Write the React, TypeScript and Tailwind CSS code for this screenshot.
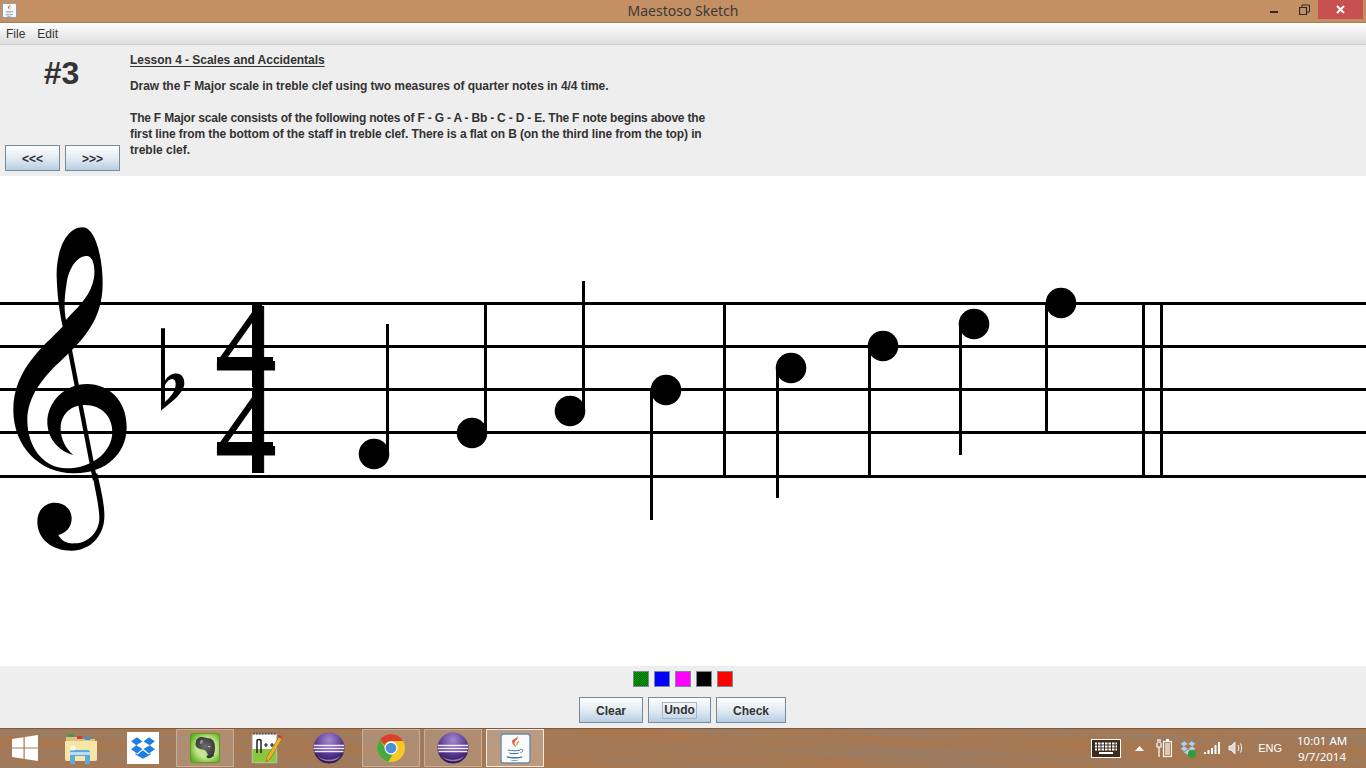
const sans = "font-['Liberation_Sans',Arial,sans-serif]"

const metalBtn =
  "flex items-center justify-center h-[26px] pt-[1px] border border-[#7a8a99] bg-gradient-to-b from-white via-[#e3ebf3] to-[#b8cfe5] text-xs font-bold text-[#333333]"

function JavaIcon({ size }: { size: number }) {
  return (
    <svg width={size} height={size} viewBox="0 0 32 32">
      <rect x="1" y="1" width="30" height="30" rx="3" fill="#f8fafc" stroke="#6d8ba6" strokeWidth="1.5" />
      <path d="M18 3c2 3-4 5-3 8 .5 1.500 1.500 2.500 1.500 4-1-2-4-3-4-6 0-3 5-3 5.500-6z" fill="#d9622b" />
      <path d="M20 8c0 2-3 3-2 6-2-2-1-5 2-6z" fill="#e8862f" />
      <path d="M8 17c3 1 10 1 13 0v1c-3 1-10 1-13 0zM9 20c3 .8 8 .8 11 0l-1 1.500c-3 .6-6 .6-9 0zM7 24c4 1.200 12 1.200 16 0v1.200c-4 1.500-12 1.500-16 0zM10 27.500c3 .6 7 .6 10 0-3 1.500-7 1.500-10 0z" fill="#4a7596" />
      <path d="M21 17c3-1 4 2 0 3.500" fill="none" stroke="#4a7596" strokeWidth="1" />
    </svg>
  )
}

function Eclipse() {
  return (
    <svg width="32" height="32" viewBox="0 0 32 32">
      <defs>
        <radialGradient id="ecl" cx="50%" cy="25%" r="80%">
          <stop offset="0" stopColor="#a58bd0" />
          <stop offset="0.55" stopColor="#5b3a94" />
          <stop offset="1" stopColor="#24103f" />
        </radialGradient>
      </defs>
      <circle cx="16" cy="16" r="15.500" fill="url(#ecl)" />
      <path d="M1 13.500h30M.8 16.500h30.400M1.500 19.500h29" stroke="#ffffff" strokeWidth="1.300" opacity="0.9" />
      <path d="M5 24c5 5 16 5 22 0-3 7-18 7-22 0z" fill="#b9a3dc" opacity="0.7" />
    </svg>
  )
}

function Chrome() {
  return (
    <svg width="30" height="30" viewBox="0 0 30 30">
      <circle cx="15" cy="15" r="14" fill="#f3c923" />
      <path d="M15 1a14 14 0 0 1 12.100 7H15a7 7 0 0 0-6.500 4.500L3.900 6.500A14 14 0 0 1 15 1z" fill="#d8402f" />
      <path d="M3.900 6.500l5.500 9a7 7 0 0 0 7 6.300L12.500 28.800A14 14 0 0 1 3.900 6.500z" fill="#4aa746" />
      <circle cx="15" cy="15" r="6.500" fill="#ffffff" />
      <circle cx="15" cy="15" r="5.300" fill="#4d8fd6" />
    </svg>
  )
}

function Folder() {
  return (
    <svg width="32" height="32" viewBox="0 0 32 32">
      <path d="M1 5h12l2 2h15v5H1z" fill="#d9c283" />
      <rect x="3" y="2" width="5" height="3" fill="#3d9a46" />
      <rect x="12" y="4" width="5" height="3" fill="#cf3f3a" />
      <rect x="20" y="5" width="5" height="3" fill="#4a90d6" />
      <path d="M0 9h32v18a2 2 0 0 1-2 2H2a2 2 0 0 1-2-2z" fill="#f8e6a8" />
      <path d="M5 32V20a2 2 0 0 1 2-2h16a2 2 0 0 1 2 2v12h-5v-8H10v8z" fill="#5fa9dc" />
      <path d="M5 20h20v3H5z" fill="#b7dcf3" />
      <circle cx="8" cy="16" r="2.500" fill="#ffffff" opacity="0.8" />
    </svg>
  )
}

function DropboxMark({ size }: { size: number }) {
  return (
    <svg width={size} height={size} viewBox="0 0 24 24" fill="#1f7fe0">
      <path d="M6.500 2 1 5.800l4.800 3.700L11.500 6zM17.500 2 12.500 6l5.700 3.500L23 5.800zM1 13.200 6.500 17l5-4-5.700-3.500zM18.200 9.500 12.500 13l5 4L23 13.200zM12 14l-5 4-2-1.300V18l7 4 7-4v-1.300L17 18z" />
    </svg>
  )
}

function Evernote() {
  return (
    <svg width="30" height="30" viewBox="0 0 30 30">
      <defs>
        <radialGradient id="enbg" cx="55%" cy="50%" r="62%">
          <stop offset="0.55" stopColor="#c4e58e" />
          <stop offset="1" stopColor="#5fb31f" />
        </radialGradient>
        <radialGradient id="enel" cx="50%" cy="45%" r="60%">
          <stop offset="0" stopColor="#6e6e6e" />
          <stop offset="1" stopColor="#2f2f2f" />
        </radialGradient>
      </defs>
      <rect x="0.500" y="0.500" width="29" height="29" rx="2.500" fill="url(#enbg)" stroke="#5a9a22" />
      <path d="M6 9c0-3 3-5 6-5 2 0 3 1 5 1 5 0 8 3 8 9 0 3-.5 6-1.500 8-1 2.500-4 4-6 3-1.500-.8-1-3 1-3-1.500-1-2-4-4-5-3-1-6-1-8-3-1-1.500-1.500-3-.5-5z" fill="url(#enel)" />
      <path d="M12 6.500c-2 .5-2 3-2 4.500 2-.2 3-1 3-3z" fill="#9a9a9a" />
      <path d="M18 13c1 0 2 .3 2.500 1-1 .4-2 .2-2.500-1z" fill="#e4f2c8" />
      <path d="M18.500 24c2-3 5-3 4.500-.5" fill="none" stroke="#3a3a3a" strokeWidth="1.500" />
    </svg>
  )
}

function NotepadPP() {
  return (
    <svg width="32" height="34" viewBox="0 0 32 34">
      <rect x="1" y="3" width="25" height="29" fill="#ffffff" stroke="#9a9a9a" />
      <path d="M1.500 18h24v13.500h-24z" fill="#8cc63f" />
      <path d="M2 2.500h23" stroke="#555555" strokeWidth="2" strokeDasharray="1.500 1.500" />
      <path d="M6 22V10c0-2 4-2 4 0v12" fill="none" stroke="#222222" strokeWidth="1.500" />
      <path d="M13 14h4m-2-2v4M19 14h4m-2-2v4" stroke="#222222" strokeWidth="1.200" />
      <path d="M28 6l3 2-12 20-4 3 1-5z" fill="#f0b429" stroke="#8a6414" strokeWidth="0.600" />
      <path d="M27.500 3.500l3.500 2-1 2-3.500-2z" fill="#b5483d" />
    </svg>
  )
}

function WoodBackground() {
  return (
    <svg className="absolute inset-0 w-full h-full" preserveAspectRatio="none">
      <filter id="wood" x="0" y="0" width="100%" height="100%">
        <feTurbulence type="fractalNoise" baseFrequency="0.004 0.09" numOctaves="4" seed="11" />
        <feColorMatrix values="0 0 0 0 0.33  0 0 0 0 0.2  0 0 0 0 0.12  3 0 0 0 -1.15" />
      </filter>
      <rect width="100%" height="100%" fill="#a87750" />
      <rect x="-40" y="-160" width="1460" height="360" filter="url(#wood)" transform="rotate(4 683 20)" />
      <rect width="100%" height="1" fill="#7d5a3e" />
    </svg>
  )
}

function StaffCanvas() {
  const staff = [303.5, 346.5, 389.5, 432.5, 476.5]
  const notes = [
    { x: 374, y: 454, stem: 387.5, y1: 324, y2: 454 },
    { x: 472, y: 433, stem: 485.5, y1: 303, y2: 433 },
    { x: 570, y: 411, stem: 583.5, y1: 281, y2: 411 },
    { x: 666, y: 390, stem: 651.5, y1: 390, y2: 520 },
    { x: 791, y: 368, stem: 777.5, y1: 368, y2: 498 },
    { x: 883, y: 346, stem: 869.5, y1: 346, y2: 476 },
    { x: 974, y: 324, stem: 960.5, y1: 324, y2: 455 },
    { x: 1061, y: 303, stem: 1046.5, y1: 303, y2: 433 },
  ]
  return (
    <svg className="block w-full h-[490px] bg-white" viewBox="0 176 1366 490">
      {staff.map((y) => (
        <line key={y} x1="0" x2="1366" y1={y} y2={y} stroke="#000" strokeWidth="3" />
      ))}
      {[724.5, 1143.5, 1161.5].map((x) => (
        <line key={x} x1={x} x2={x} y1="303" y2="476" stroke="#000" strokeWidth="3" />
      ))}
      {notes.map((n) => (
        <g key={n.x}>
          <circle cx={n.x} cy={n.y} r="15.300" fill="#000" />
          <line x1={n.stem} x2={n.stem} y1={n.y1} y2={n.y2} stroke="#000" strokeWidth="3" />
        </g>
      ))}
      {/* treble clef, traced at 3x */}
      <g transform="translate(0 220) scale(0.3333)">
        <path
          fillRule="evenodd"
          d="M183 325C130 380 40 450 40 570C40 680 120 762 225 760C320 758 380 700 380 620C380 540 325 492 262 492C190 492 140 550 142 610C144 660 180 695 220 705C195 685 180 650 182 620C185 580 215 555 255 555C305 555 337 590 337 635C337 700 270 745 200 745C130 745 82 680 82 600C82 530 130 470 180 425C250 360 308 300 308 190C308 110 285 22 248 22C195 22 168 100 170 170C172 230 178 270 188 320Z M198 300C190 260 195 220 200 190C207 140 235 105 262 108C285 112 288 160 278 190C265 235 230 265 198 300Z"
        />
        <path d="M200 340L285 780" fill="none" stroke="#000" strokeWidth="13" />
        <path d="M112 905C112 870 135 848 165 848C195 848 215 870 215 895C215 925 195 940 175 945C185 965 205 972 225 970C270 968 300 930 298 890C296 850 285 810 278 765L292 760C303 810 315 860 313 895C310 950 270 992 215 992C160 992 112 960 112 905Z" />
        {/* flat */}
        <path
          fillRule="evenodd"
          d="M483 325H495V482C510 455 553 450 553 490C553 520 510 550 483 572Z M495 495V545C515 530 528 510 527 490C525 470 505 475 495 495Z"
        />
      </g>
      {/* 4/4, the serif digit is too thin so the heavy strokes sit on top */}
      <text x="215" y="387.500" fontSize="123" fontFamily="'Liberation Serif', serif" fill="#000" stroke="#000" strokeWidth="1">4</text>
      <rect x="252" y="305" width="10" height="82" />
      <rect x="217" y="357" width="56" height="9" />
      <text x="215" y="473" fontSize="123" fontFamily="'Liberation Serif', serif" fill="#000" stroke="#000" strokeWidth="1">4</text>
      <rect x="252" y="391" width="10" height="82" />
      <rect x="217" y="442" width="56" height="10" />
    </svg>
  )
}

function TaskSlot({ children, state }: { children: React.ReactNode; state?: "open" | "active" }) {
  const look =
    state === "active"
      ? "border border-[#f2e9e0] bg-[#ffffff40]"
      : state === "open"
        ? "border border-[#c9ae98] bg-[#ffffff26]"
        : ""
  return <div className={`w-[58px] h-[38px] flex items-center justify-center ${look}`}>{children}</div>
}

export default function App() {
  const swatches = ["bg-[#0000ff]", "bg-[#ff00ff]", "bg-[#000000]", "bg-[#ff0000]"]
  return (
    <div className={`w-[1366px] h-[768px] flex flex-col overflow-hidden bg-[#eeeeee] ${sans}`}>
      {/* window title */}
      <div className="relative h-[23px] shrink-0 flex items-center justify-center bg-[#c49063] border-b border-[#a87b55]">
        <div className="absolute left-[2px] top-[3px]">
          <JavaIcon size={15} />
        </div>
        <span className="text-[14px] text-[#3a3a3a] font-['Noto_Sans',sans-serif] -mt-[1px]">Maestoso Sketch</span>
        <div className="absolute right-[3px] top-0 flex items-start">
          <div className="w-[30px] h-[19px] flex items-center justify-center pt-[5px]">
            <div className="w-[8px] h-[2px] bg-[#2b2b2b]" />
          </div>
          <div className="w-[30px] h-[19px] mr-[-1px] flex items-center justify-center">
            <svg width="11" height="11" viewBox="0 0 11 11" fill="none" stroke="#2b2b2b">
              <path d="M.5 3.500h7v7h-7z" strokeWidth="1.200" />
              <path d="M3 3V1h7.500v7H8" strokeWidth="1" />
            </svg>
          </div>
          <div className="w-[45px] h-[19px] bg-[#c75050] flex items-center justify-center">
            <svg width="9" height="9" viewBox="0 0 9 9" stroke="#fff" strokeWidth="2">
              <path d="M1 1l7 7M8 1L1 8" />
            </svg>
          </div>
        </div>
      </div>

      {/* menu */}
      <div className="h-[22px] shrink-0 flex items-center gap-3 pl-[6px] text-xs text-[#333333] bg-gradient-to-b from-white to-[#dddddd] border-b border-[#cccccc]">
        <span>File</span>
        <span>Edit</span>
      </div>

      {/* lesson */}
      <div className="h-[131px] shrink-0 flex">
        <div className="w-[130px] shrink-0 pl-[5px] flex flex-col">
          <div className="w-[115px] text-center text-[32px] leading-[36px] font-bold text-[#333333] mt-[10px] -ml-[1px]">#3</div>
          <div className="flex gap-[5px] mt-auto mb-[5px]">
            <button className={`${metalBtn} w-[55px]`}>&lt;&lt;&lt;</button>
            <button className={`${metalBtn} w-[55px]`}>&gt;&gt;&gt;</button>
          </div>
        </div>
        <div className="w-[590px] pt-[7px] text-xs font-bold leading-4 text-[#333333] whitespace-nowrap">
          <div className="underline underline-offset-2 tracking-[-0.03px]">Lesson 4 - Scales and Accidentals</div>
          <p className="mt-[10px] tracking-[-0.05px]">Draw the F Major scale in treble clef using two measures of quarter notes in 4/4 time.</p>
          <p className="mt-4">
            <span className="block tracking-[-0.2px]">The F Major scale consists of the following notes of F - G - A - Bb - C - D - E. The F note begins above the</span>
            <span className="block tracking-[-0.105px]">first line from the bottom of the staff in treble clef. There is a flat on B (on the third line from the top) in</span>
            <span className="block">treble clef.</span>
          </p>
        </div>
      </div>

      <StaffCanvas />

      {/* tools */}
      <div className="h-[62px] shrink-0 flex flex-col items-center pt-[5px]">
        <div className="flex gap-[5px]">
          <div className="w-4 h-4 border border-[#7a8a99] bg-[#008000] bg-[repeating-conic-gradient(#006400_0%_25%,#00a000_0%_50%)] bg-[length:2px_2px]" />
          {swatches.map((c) => (
            <div key={c} className={`w-4 h-4 border border-[#7a8a99] ${c}`} />
          ))}
        </div>
        <div className="flex gap-[5px] mt-[10px] ml-[-1px]">
          <button className={`${metalBtn} w-[64px]`}>Clear</button>
          <button className={`${metalBtn} w-[63px]`}>
            <span className="border border-[#a3b8cc] px-[1px] leading-[15px]">Undo</span>
          </button>
          <button className={`${metalBtn} w-[70px]`}>Check</button>
        </div>
      </div>

      {/* taskbar */}
      <div className="relative h-[40px] shrink-0 flex items-center text-white">
        <WoodBackground />
        <div className="relative flex items-center w-full h-full">
          <svg width="26" height="26" viewBox="0 0 26 26" fill="#ffffff" className="ml-[12px] mr-[14px] shrink-0">
            <path d="M0 4l11.500-1.800V12.400H0zM12.700 2l13.300-2v12.400H12.700zM0 13.600h11.500v10.200L0 22zM12.700 13.600H26V26l-13.300-2z" />
          </svg>
          <div className="flex gap-1">
            <TaskSlot><Folder /></TaskSlot>
            <TaskSlot>
              <div className="w-8 h-8 bg-white flex items-center justify-center">
                <DropboxMark size={26} />
              </div>
            </TaskSlot>
            <TaskSlot state="open"><Evernote /></TaskSlot>
            <TaskSlot><NotepadPP /></TaskSlot>
            <TaskSlot><Eclipse /></TaskSlot>
            <TaskSlot state="open"><Chrome /></TaskSlot>
            <TaskSlot state="open"><Eclipse /></TaskSlot>
            <TaskSlot state="active"><JavaIcon size={31} /></TaskSlot>
          </div>

          {/* tray */}
          <div className="ml-auto flex items-center pr-[19px]">
            <svg width="30" height="19" viewBox="0 0 30 19" className="shrink-0">
              <rect x="0.500" y="0.500" width="29" height="18" fill="#3d2a1d" stroke="#ffffff" />
              <path d="M4 4.500h22M4 7.500h22M4 10.500h22M8 14h14" stroke="#ffffff" strokeWidth="2" />
              <path d="M6.500 3v9M10 3v9M13.500 3v9M17 3v9M20.500 3v9M24 3v9" stroke="#3d2a1d" />
            </svg>
            <svg width="9" height="5" viewBox="0 0 9 5" fill="#ffffff" className="ml-[14px]">
              <path d="M4.500 0L9 5H0z" />
            </svg>
            <svg width="16" height="20" viewBox="0 0 16 20" fill="none" stroke="#ffffff" className="ml-[12px]">
              <rect x="7.500" y="3.500" width="8" height="15" strokeWidth="1.200" />
              <path d="M10 2h3" strokeWidth="2" />
              <rect x="9" y="5" width="5" height="12" fill="#ffffff" opacity="0.6" stroke="none" />
              <path d="M1 5v4h4V5M3 9v10M2 1v4M4 1v4" strokeWidth="1.200" />
            </svg>
            <div className="relative ml-[8px] w-4 h-4">
              <svg width="16" height="16" viewBox="0 0 24 24" fill="#a9d3f0">
                <path d="M6.500 2 1 5.800l4.800 3.700L11.500 6zM17.500 2 12.500 6l5.700 3.500L23 5.800zM1 13.200 6.500 17l5-4-5.700-3.500zM18.200 9.500 12.500 13l5 4L23 13.200zM12 14l-5 4-2-1.300V18l7 4 7-4v-1.300L17 18z" />
              </svg>
              <div className="absolute right-0 bottom-[-2px] w-2 h-2 rounded-full bg-[#2e9e3a]" />
            </div>
            <svg width="16" height="12" viewBox="0 0 16 12" fill="#ffffff" className="ml-[8px]">
              <path d="M0 10h2v2H0zM3.500 8h2v4h-2zM7 6h2v6H7zM10.500 3h2v9h-2zM14 0h2v12h-2z" />
            </svg>
            <svg width="15" height="14" viewBox="0 0 15 14" fill="none" stroke="#ffffff" className="ml-[8px]">
              <path d="M1 5h2l4-4v12l-4-4H1z" fill="#d8d8d8" strokeWidth="0.800" />
              <path d="M10 4c1 2 1 4 0 6M12.500 2.500c1.500 3 1.500 6 0 9" strokeWidth="1" />
            </svg>
            <span className="ml-[15px] text-[11px]">ENG</span>
            <div className="ml-[15px] mt-[1px] text-[11.500px] leading-4 text-center w-[50px] font-['Noto_Sans',sans-serif] whitespace-nowrap">
              <div>10:01 AM</div>
              <div>9/7/2014</div>
            </div>
          </div>
        </div>
      </div>
    </div>
  )
}
